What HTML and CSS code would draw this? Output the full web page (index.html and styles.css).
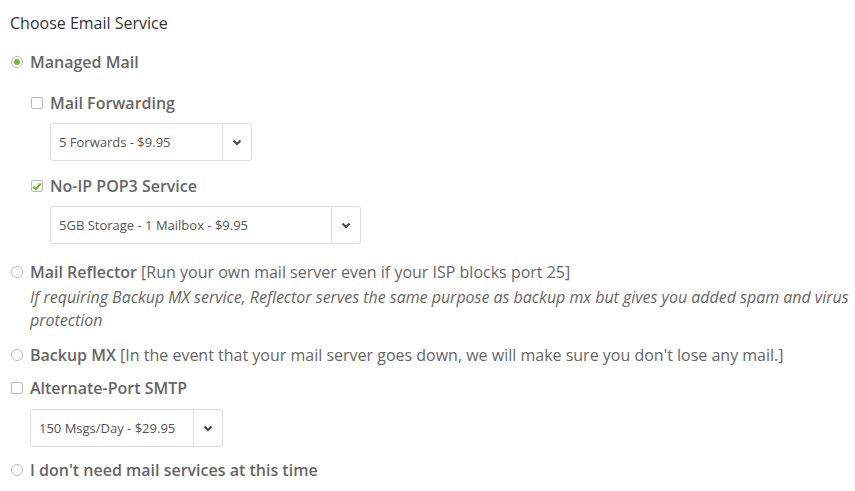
FILE: index.html
```html
<!DOCTYPE html>
<html>
<head>
<meta charset="utf-8">
<link rel="stylesheet" href="styles.css">
</head>
<body>
<div class="page">
  <h3 class="title">Choose Email Service</h3>

  <label class="opt first"><span class="radio on"></span><span class="lbl">Managed Mail</span></label>
  <div class="sub">
    <label class="opt opt-fwd"><span class="check"></span><span class="lbl">Mail Forwarding</span></label>
    <div class="select sel-fwd">
      <span class="sel-text">5 Forwards - $9.95</span>
      <span class="sel-btn"><svg width="10" height="7" viewBox="0 0 10 7"><path d="M1.5 1.5 L5 5 L8.5 1.5" fill="none" stroke="#444" stroke-width="2"/></svg></span>
    </div>
    <label class="opt opt-pop"><span class="check on"><svg width="10" height="9" viewBox="0 0 10 9"><path d="M1.2 4.6 L3.8 7 L8.8 1.6" fill="none" stroke="#7cb82f" stroke-width="2.2"/></svg></span><span class="lbl">No-IP POP3 Service</span></label>
    <div class="select sel-pop">
      <span class="sel-text">5GB Storage - 1 Mailbox - $9.95</span>
      <span class="sel-btn"><svg width="10" height="7" viewBox="0 0 10 7"><path d="M1.5 1.5 L5 5 L8.5 1.5" fill="none" stroke="#444" stroke-width="2"/></svg></span>
    </div>
  </div>

  <label class="opt opt-refl"><span class="radio"></span><span class="lbl"><b>Mail Reflector</b> [Run your own mail server even if your ISP blocks port 25]</span></label>
  <p class="note">If requiring Backup MX service, Reflector serves the same purpose as backup mx but gives you added spam and virus protection</p>

  <label class="opt opt-bmx"><span class="radio"></span><span class="lbl"><b>Backup MX</b> [In the event that your mail server goes down, we will make sure you don't lose any mail.]</span></label>

  <label class="opt opt-smtp"><span class="check"></span><span class="lbl"><b>Alternate-Port SMTP</b></span></label>
  <div class="select sel-smtp">
    <span class="sel-text">150 Msgs/Day - $29.95</span>
    <span class="sel-btn"><svg width="10" height="7" viewBox="0 0 10 7"><path d="M1.5 1.5 L5 5 L8.5 1.5" fill="none" stroke="#444" stroke-width="2"/></svg></span>
  </div>

  <label class="opt opt-none"><span class="radio"></span><span class="lbl"><b>I don't need mail services at this time</b></span></label>
</div>
</body>
</html>
```

FILE: styles.css
```css
* { box-sizing: border-box; }
html, body { margin: 0; padding: 0; background: #fff; }
body {
  font-family: "Open Sans", "Noto Sans", sans-serif;
  color: #666;
  font-size: 16px;
}
.page { padding: 11px 0 0 11px; }
.title {
  margin: 0 0 0 -1px;
  font-size: 16px;
  font-weight: 500;
  line-height: 24px;
  color: #333;
}
.opt {
  display: flex;
  align-items: flex-start;
  gap: 7px;
  line-height: 23px;
}
.lbl b { font-weight: 600; }
.first .lbl, .opt-fwd .lbl, .opt-pop .lbl { font-weight: 600; }
.radio, .check {
  flex: none;
  width: 12px;
  height: 12px;
  margin-top: 5px;
  border: 1px solid #b9b9b9;
  background: #fff;
  display: flex;
  align-items: center;
  justify-content: center;
}
.radio { border-radius: 50%; }
.check { border-radius: 2px; }
.radio.on::after {
  content: "";
  width: 6px;
  height: 6px;
  border-radius: 50%;
  background: #7cb82f;
}
.check svg { display: block; }

.first { margin-top: 16px; }
.sub { padding-left: 20px; }
.opt-fwd { margin-top: 18px; }
.opt-pop { margin-top: 14px; }

.select {
  display: flex;
  height: 38px;
  border: 1px solid #dcdcdc;
  border-radius: 3px;
  margin-left: 19px;
  font-size: 13px;
  color: #555;
  background: #fff;
}
.sel-text {
  flex: 1;
  padding-left: 8px;
  line-height: 36px;
}
.sel-btn {
  width: 29px;
  border-left: 1px solid #dcdcdc;
  display: flex;
  align-items: center;
  justify-content: center;
}
.sel-fwd { width: 202px; margin-top: 8px; }
.sel-pop { width: 311px; margin-top: 8px; }
.sel-smtp { width: 193px; margin-top: 9px; }

.opt-refl { margin-top: 17px; }
.note {
  margin: 2px 0 0 19px;
  font-style: italic;
  line-height: 23px;
  letter-spacing: -0.02px;
}
.opt-bmx { margin-top: 12px; }
.opt-smtp { margin-top: 10px; }
.opt-none { margin-top: 12px; }
```
